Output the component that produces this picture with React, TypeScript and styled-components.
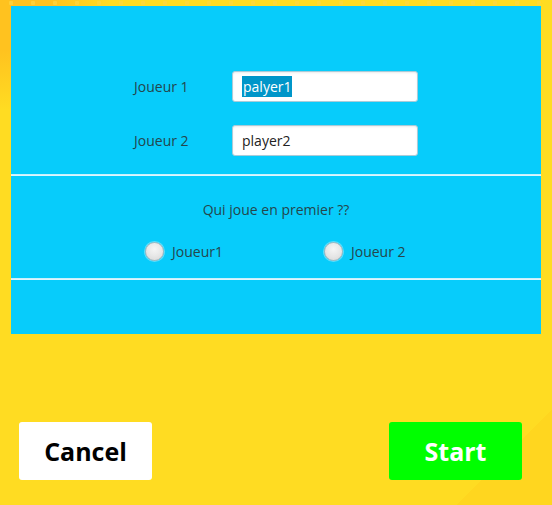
import React from "react";
import styled, { createGlobalStyle } from "styled-components";

const Global = createGlobalStyle`
  html, body { margin: 0; padding: 0; }
  body { font-family: "Open Sans", "Noto Sans", sans-serif; }
`;

const Screen = styled.div`
  position: relative;
  width: 552px;
  height: 505px;
  overflow: hidden;
  background:
    radial-gradient(circle at 0 0, #ffc21f 0, #ffc21f 50px, rgba(255,205,30,0) 110px),
    linear-gradient(135deg, rgba(0,0,0,0) 91%, #ffd61f 91%),
    #ffdc22;
  display: flex;
  flex-direction: column;
  padding: 6px 11px 0 11px;
  box-sizing: border-box;
`;

const Dots = styled.div`
  position: absolute;
  left: 0;
  top: 0;
  width: 552px;
  height: 6px;
  background-image: radial-gradient(circle, #ffd640 2px, rgba(0,0,0,0) 2.5px);
  background-size: 22px 12px;
  background-position: 0 -3px;
  opacity: 0.7;
`;

const Panel = styled.div`
  position: relative;
  width: 530px;
  height: 328px;
  background: #07ccfb;
  display: flex;
  flex-direction: column;
`;

const NamesSection = styled.div`
  height: 168px;
  box-sizing: border-box;
  padding-top: 65px;
  display: flex;
  flex-direction: column;
  gap: 23px;
`;

const Row = styled.div`
  display: flex;
  align-items: center;
  height: 31px;
`;

const Label = styled.span`
  width: 98px;
  margin-left: 123px;
  font-size: 14px;
  color: #24464c;
`;

const Input = styled.div`
  width: 186px;
  height: 31px;
  box-sizing: border-box;
  background: #fff;
  border: 1px solid #a9cbd8;
  border-radius: 3px;
  box-shadow: inset 0 1px 2px rgba(0,0,0,0.08);
  display: flex;
  align-items: center;
  padding-left: 9px;
  font-size: 14px;
  color: #222;
`;

const Selected = styled.span`
  background: #0096c9;
  color: #fff;
  padding: 1px 1px;
`;

const Separator = styled.div`
  height: 2px;
  background: linear-gradient(#bfeefc, #e7f8fe);
`;

const ChoiceSection = styled.div`
  height: 102px;
  display: flex;
  flex-direction: column;
  align-items: center;
  box-sizing: border-box;
  padding-top: 24px;
`;

const Question = styled.div`
  font-size: 14px;
  color: #24464c;
  height: 20px;
  line-height: 20px;
`;

const Radios = styled.div`
  display: flex;
  width: 530px;
  margin-top: 22px;
`;

const RadioItem = styled.label<{ $left: number }>`
  display: flex;
  align-items: center;
  gap: 8px;
  margin-left: ${(p) => p.$left}px;
  font-size: 14px;
  color: #24464c;
`;

const Circle = styled.span`
  width: 19px;
  height: 19px;
  box-sizing: border-box;
  border-radius: 50%;
  border: 1px solid #b5bcc0;
  background: radial-gradient(circle at 50% 35%, #f6f6f6 0, #e6e6e6 55%, #d6d6d6 100%);
  box-shadow: 0 0 0 1px rgba(255,255,255,0.35);
`;

const BottomSection = styled.div`
  flex: 1;
`;

const Buttons = styled.div`
  display: flex;
  justify-content: space-between;
  margin-top: 88px;
  padding: 0 19px 0 8px;
`;

const Button = styled.div<{ $bg: string; $fg: string }>`
  width: 133px;
  height: 58px;
  border-radius: 3px;
  background: ${(p) => p.$bg};
  color: ${(p) => p.$fg};
  display: flex;
  align-items: center;
  justify-content: center;
  font-size: 25px;
  font-weight: 700;
`;

export default function App() {
  return (
    <>
      <Global />
      <Screen>
        <Dots />
        <Panel>
          <NamesSection>
            <Row>
              <Label>Joueur 1</Label>
              <Input>
                <Selected>palyer1</Selected>
              </Input>
            </Row>
            <Row>
              <Label>Joueur 2</Label>
              <Input>player2</Input>
            </Row>
          </NamesSection>
          <Separator />
          <ChoiceSection>
            <Question>Qui joue en premier ??</Question>
            <Radios>
              <RadioItem $left={134}>
                <Circle />
                Joueur1
              </RadioItem>
              <RadioItem $left={101}>
                <Circle />
                Joueur 2
              </RadioItem>
            </Radios>
          </ChoiceSection>
          <Separator />
          <BottomSection />
        </Panel>
        <Buttons>
          <Button $bg="#ffffff" $fg="#000000">Cancel</Button>
          <Button $bg="#00ff00" $fg="#ffffff">Start</Button>
        </Buttons>
      </Screen>
    </>
  );
}
